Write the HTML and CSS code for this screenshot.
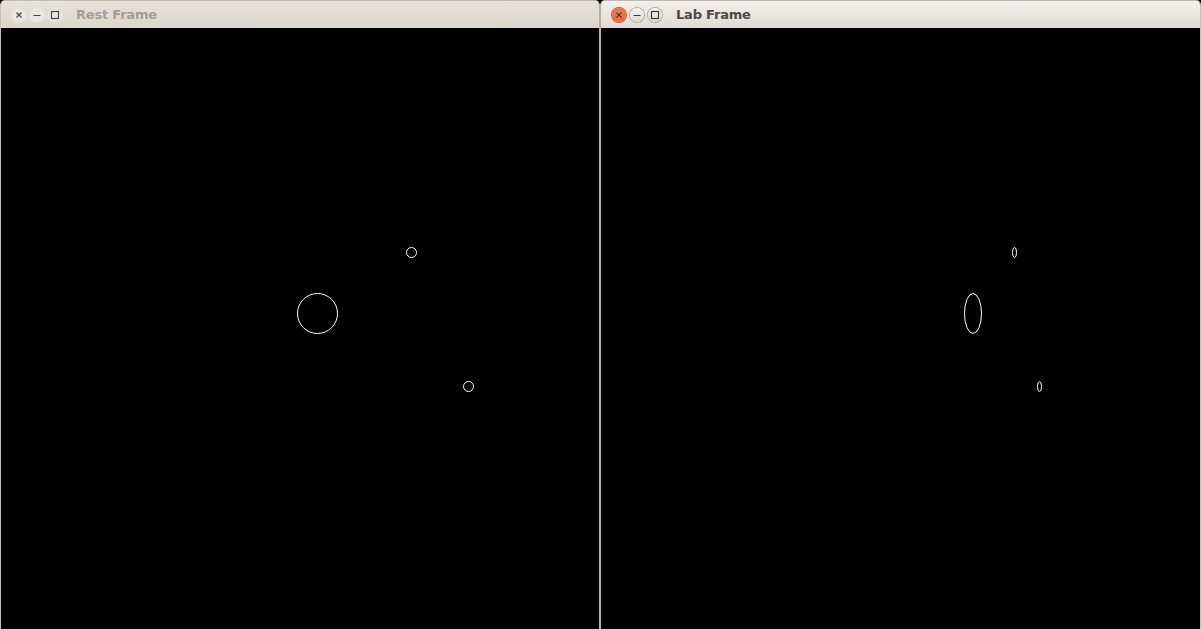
FILE: index.html
```html
<!DOCTYPE html>
<html>
<head>
<meta charset="utf-8">
<link rel="stylesheet" href="styles.css">
</head>
<body>
<div class="desk">
  <div class="window inactive left">
    <div class="titlebar">
      <div class="buttons">
        <span class="btn close"><svg viewBox="0 0 14 14" width="14" height="14"><path d="M4.5 4.5 L9.5 9.5 M9.5 4.5 L4.5 9.5" /></svg></span>
        <span class="btn min"><svg viewBox="0 0 14 14" width="14" height="14"><path d="M3.5 7.5 H10.5" /></svg></span>
        <span class="btn max"><svg viewBox="0 0 14 14" width="14" height="14"><rect x="3.5" y="3.5" width="7" height="7" /></svg></span>
      </div>
      <span class="title">Rest Frame</span>
    </div>
    <div class="canvas">
      <svg class="scene" width="598" height="601" viewBox="0 0 598 601">
        <circle cx="316.5" cy="285.5" r="20" />
        <circle cx="410.5" cy="224.5" r="5" />
        <circle cx="467.5" cy="358.5" r="5" />
      </svg>
    </div>
  </div>
  <div class="window active right">
    <div class="titlebar">
      <div class="buttons">
        <span class="btn close"><svg viewBox="0 0 14 14" width="14" height="14"><path d="M4.5 4.5 L9.5 9.5 M9.5 4.5 L4.5 9.5" /></svg></span>
        <span class="btn min"><svg viewBox="0 0 14 14" width="14" height="14"><path d="M3.5 7.5 H10.5" /></svg></span>
        <span class="btn max"><svg viewBox="0 0 14 14" width="14" height="14"><rect x="3.5" y="3.5" width="7" height="7" /></svg></span>
      </div>
      <span class="title">Lab Frame</span>
    </div>
    <div class="canvas">
      <svg class="scene" width="599" height="601" viewBox="0 0 599 601">
        <ellipse cx="372" cy="285.5" rx="8.5" ry="20" />
        <ellipse cx="413.5" cy="224.5" rx="2" ry="5" />
        <ellipse cx="438.5" cy="358.5" rx="2" ry="5" />
      </svg>
    </div>
  </div>
</div>
</body>
</html>
```

FILE: styles.css
```css
html, body {
  margin: 0;
  padding: 0;
  background: #000;
  overflow: hidden;
}

.desk {
  display: flex;
  width: 1201px;
  height: 629px;
}

.window {
  display: flex;
  flex-direction: column;
  height: 629px;
  box-sizing: border-box;
  border-left: 1px solid #c9bcb0;
  border-right: 1px solid #b9aea3;
  border-top-left-radius: 5px;
  border-top-right-radius: 5px;
  overflow: hidden;
  background: #000;
}

.window.left {
  width: 600px;
}

.window.right {
  width: 601px;
  border-left-color: #b9aea3;
  border-right-color: #c9bcb0;
}

.titlebar {
  height: 28px;
  box-sizing: border-box;
  border-top: 1px solid #c2b8ad;
  display: flex;
  align-items: center;
  flex: none;
}

.inactive .titlebar {
  background: linear-gradient(#e6e2dc, #dcd6cd);
}

.active .titlebar {
  background: linear-gradient(#f3f1ed, #e0dad2);
}

.buttons {
  display: flex;
  gap: 4px;
  margin-left: 11px;
  margin-top: 1px;
}

.btn {
  width: 14px;
  height: 14px;
  border-radius: 50%;
  display: flex;
  align-items: center;
  justify-content: center;
}

.btn svg {
  display: block;
  fill: none;
  stroke-width: 1.2;
}

.inactive .btn {
  background: #ebe8e4;
  box-shadow: 0 0 0 1px #e3dfd9;
}

.inactive .btn svg {
  stroke: #4a4845;
}

.active .btn {
  background: linear-gradient(#f6f4f1, #dcd8d2);
  box-shadow: 0 0 0 1px #b4aca3;
}

.active .btn.close {
  background: radial-gradient(circle at 50% 40%, #f7845a, #e85a2a);
  box-shadow: 0 0 0 1px #c45a38;
}

.active .btn svg {
  stroke: #3c3b37;
}

.title {
  margin-left: 14px;
  margin-top: -1px;
  font-family: "DejaVu Sans", sans-serif;
  font-weight: bold;
  font-size: 13px;
  letter-spacing: -0.2px;
}

.inactive .title {
  color: #a39e97;
}

.active .title {
  color: #4c4a46;
}

.canvas {
  flex: 1;
  background: #000;
}

.scene {
  display: block;
}

.scene circle,
.scene ellipse {
  fill: none;
  stroke: #ffffff;
  stroke-width: 1;
}
```
